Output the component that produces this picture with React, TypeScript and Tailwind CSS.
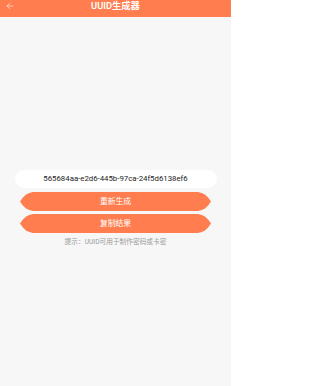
import { ArrowLeft } from "lucide-react";

const uuid = "565684aa-e2d6-445b-97ca-24f5d6138ef6";

// pointed "lens" ends for the action buttons
const shape =
  "[clip-path:polygon(0_50%,2.7px_30%,5.75px_15%,9.2px_5%,13px_0,178px_0,181.8px_5%,185.25px_15%,188.3px_30%,191px_50%,188.3px_70%,185.25px_85%,181.8px_95%,178px_100%,13px_100%,9.2px_95%,5.75px_85%,2.7px_70%)]";

function ActionButton({ label }: { label: string }) {
  return (
    <button
      className={`w-[191px] h-[19px] bg-[#ff7d4e] text-white text-[7.8px] leading-none flex items-center justify-center ${shape}`}
    >
      {label}
    </button>
  );
}

export default function App() {
  return (
    <div className="w-[231px] h-[386px] bg-[#f7f7f7] flex flex-col font-['Roboto','Noto_Sans_CJK_SC',sans-serif]">
      {/* Header */}
      <div className="h-[17px] bg-[#ff7d4e] relative flex items-start justify-center pt-[1px]">
        <ArrowLeft size={10} strokeWidth={1.5} className="absolute left-[5px] top-[1px] text-white/90" />
        <span className="text-white text-[9.3px] font-semibold leading-[10px]">UUID生成器</span>
      </div>

      {/* Body */}
      <div className="flex flex-col items-center pt-[153px]">
        <div className="w-[202px] h-[18px] bg-white rounded-full flex items-center justify-center">
          <span className="text-[#222] text-[7.8px] leading-none">{uuid}</span>
        </div>
        <div className="flex flex-col gap-[3px] mt-[4px]">
          <ActionButton label="重新生成" />
          <ActionButton label="复制结果" />
        </div>
        <p className="mt-[4px] text-[#999] text-[6.7px] leading-[10px]">提示：UUID可用于制作密码或卡密</p>
      </div>
    </div>
  );
}
